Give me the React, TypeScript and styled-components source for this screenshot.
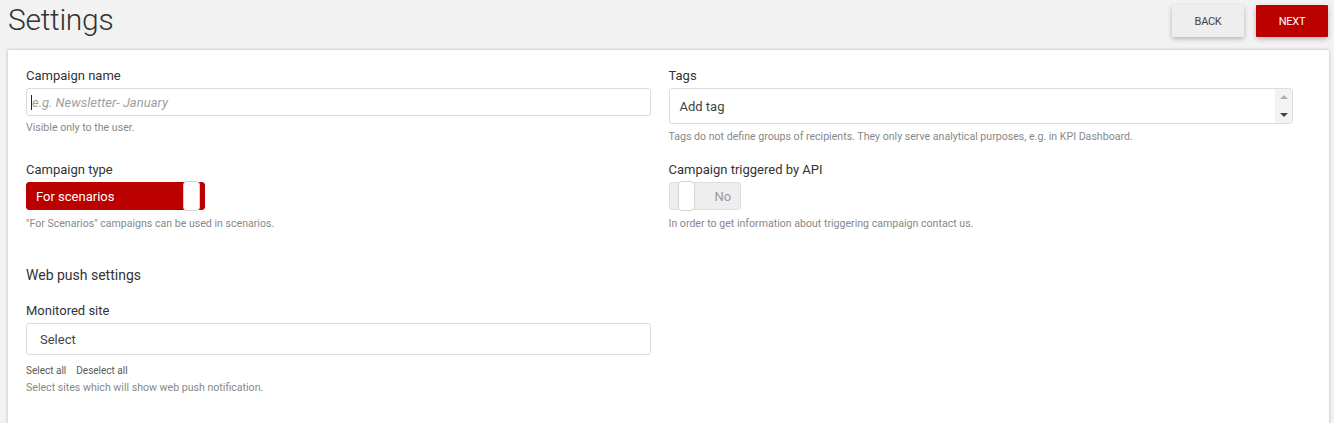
import React from "react";
import styled, { createGlobalStyle } from "styled-components";

const Global = createGlobalStyle`
  html, body { margin: 0; padding: 0; background: #f2f2f2; }
  body { font-family: Roboto, "Liberation Sans", Arial, sans-serif; color: #333; }
  * { box-sizing: border-box; }
`;

const Page = styled.div`
  padding: 0 5px 0 8px;
  height: 423px;
  overflow: hidden;
`;

const Header = styled.div`
  display: flex;
  align-items: flex-start;
  justify-content: space-between;
  height: 50px;
`;

const Title = styled.h1`
  margin: 0;
  font-weight: 300;
  font-size: 30px;
  line-height: 40px;
  color: #333;
  letter-spacing: -0.3px;
`;

const Actions = styled.div`
  display: flex;
  gap: 12px;
  padding-top: 5px;
  padding-right: 1px;
`;

const Btn = styled.button<{ $primary?: boolean }>`
  width: 72px;
  height: 32px;
  border: none;
  border-radius: 1px;
  font-family: Roboto, "Liberation Sans", Arial, sans-serif;
  font-size: 11px;
  text-transform: uppercase;
  letter-spacing: -0.3px;
  background: ${(p) => (p.$primary ? "#bb0000" : "#eeeeee")};
  color: ${(p) => (p.$primary ? "#fff" : "#444")};
  box-shadow: 0 2px 5px rgba(0, 0, 0, 0.25);
  cursor: pointer;
`;

const Card = styled.div`
  background: #fff;
  box-shadow: 0 0 3px rgba(0, 0, 0, 0.25);
  padding: 18px 36px 40px 18px;
  min-height: 380px;
`;

const Columns = styled.div`
  display: grid;
  grid-template-columns: 1fr 1fr;
  column-gap: 18px;
`;

const Col = styled.div`
  display: flex;
  flex-direction: column;
`;

const Field = styled.div<{ $h: number }>`
  display: flex;
  flex-direction: column;
  height: ${(p) => p.$h}px;
`;

const Label = styled.div`
  font-size: 13px;
  line-height: 16px;
  color: #333;
  margin-bottom: 4px;
`;

const Input = styled.div<{ $h: number }>`
  height: ${(p) => p.$h}px;
  border: 1px solid #dcdcdc;
  border-radius: 3px;
  display: flex;
  align-items: center;
  font-size: 13px;
  position: relative;
`;

const Placeholder = styled.span`
  font-style: italic;
  color: #a0a0a0;
  padding-left: 4px;
  display: flex;
  align-items: center;
`;

const Caret = styled.span`
  display: inline-block;
  width: 1px;
  height: 15px;
  background: #222;
`;

const Value = styled.span<{ $pl: number }>`
  color: #444;
  padding-left: ${(p) => p.$pl}px;
`;

const Help = styled.div<{ $mt?: number }>`
  font-size: 10.6px;
  line-height: 13px;
  color: #888;
  margin-top: ${(p) => p.$mt ?? 5}px;
`;

const Spinner = styled.div`
  position: absolute;
  right: 0;
  top: 0;
  bottom: 0;
  width: 17px;
  background: #f3f3f3;
  display: flex;
  flex-direction: column;
  align-items: center;
  justify-content: space-between;
  padding: 6px 0 6px;
`;

const Tri = styled.div<{ $up?: boolean }>`
  width: 0;
  height: 0;
  border-left: 4px solid transparent;
  border-right: 4px solid transparent;
  ${(p) =>
    p.$up
      ? "border-bottom: 4px solid #b0b0b0;"
      : "border-top: 4px solid #444;"}
`;

const Toggle = styled.div<{ $on?: boolean; $w: number }>`
  width: ${(p) => p.$w}px;
  height: 28px;
  border-radius: 3px;
  background: ${(p) => (p.$on ? "#bb0000" : "#eeeeee")};
  border: 1px solid ${(p) => (p.$on ? "#bb0000" : "#dedede")};
  position: relative;
  display: flex;
  align-items: center;
  font-size: 13px;
  color: ${(p) => (p.$on ? "#fff" : "#9a9a9a")};
`;

const ToggleText = styled.span<{ $pl: number }>`
  padding-left: ${(p) => p.$pl}px;
`;

const Knob = styled.div<{ $left: number }>`
  position: absolute;
  top: -2px;
  left: ${(p) => p.$left}px;
  width: 17px;
  height: 30px;
  background: #fff;
  border: 1px solid #d4d4d4;
  border-radius: 4px;
`;

const Section = styled.div`
  font-size: 14px;
  line-height: 18px;
  color: #333;
  height: 37px;
`;

const Links = styled.div`
  display: flex;
  gap: 10px;
  font-size: 10px;
  line-height: 12px;
  color: #5a5a5a;
  margin-top: 10px;
`;

export default function App() {
  return (
    <>
      <Global />
      <Page>
        <Header>
          <Title>Settings</Title>
          <Actions>
            <Btn>Back</Btn>
            <Btn $primary>Next</Btn>
          </Actions>
        </Header>
        <Card>
          <Columns>
            <Col>
              <Field $h={94}>
                <Label>Campaign name</Label>
                <Input $h={28}>
                  <Placeholder>
                    <Caret />
                    e.g. Newsletter- January
                  </Placeholder>
                </Input>
                <Help>Visible only to the user.</Help>
              </Field>
              <Field $h={104}>
                <Label>Campaign type</Label>
                <Toggle $on $w={179}>
                  <ToggleText $pl={9}>For scenarios</ToggleText>
                  <Knob $left={156} />
                </Toggle>
                <Help $mt={7}>"For Scenarios" campaigns can be used in scenarios.</Help>
              </Field>
              <Section>Web push settings</Section>
              <Label>Monitored site</Label>
              <Input $h={32}>
                <Value $pl={13}>Select</Value>
              </Input>
              <Links>
                <span>Select all</span>
                <span>Deselect all</span>
              </Links>
              <Help $mt={4}>Select sites which will show web push notification.</Help>
            </Col>
            <Col>
              <Field $h={94}>
                <Label>Tags</Label>
                <Input $h={36}>
                  <Value $pl={10}>Add tag</Value>
                  <Spinner>
                    <Tri $up />
                    <Tri />
                  </Spinner>
                </Input>
                <Help $mt={6}>
                  Tags do not define groups of recipients. They only serve analytical purposes, e.g. in KPI Dashboard.
                </Help>
              </Field>
              <Field $h={104}>
                <Label>Campaign triggered by API</Label>
                <Toggle $w={72}>
                  <ToggleText $pl={45}>No</ToggleText>
                  <Knob $left={8} />
                </Toggle>
                <Help $mt={7}>In order to get information about triggering campaign contact us.</Help>
              </Field>
            </Col>
          </Columns>
        </Card>
      </Page>
    </>
  );
}
